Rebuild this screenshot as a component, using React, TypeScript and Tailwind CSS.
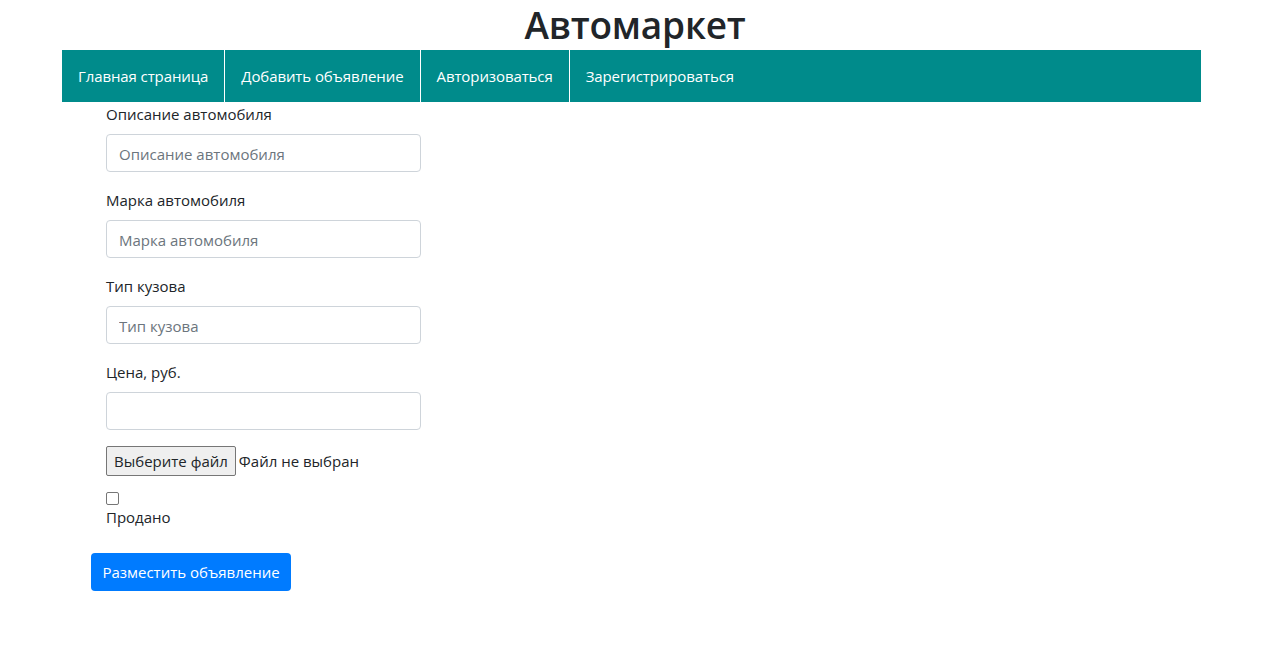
import React from 'react';

const NAV_ITEMS = ['Главная страница', 'Добавить объявление', 'Авторизоваться', 'Зарегистрироваться'];

const FIELDS = [
  { label: 'Описание автомобиля', placeholder: 'Описание автомобиля' },
  { label: 'Марка автомобиля', placeholder: 'Марка автомобиля' },
  { label: 'Тип кузова', placeholder: 'Тип кузова' },
  { label: 'Цена, руб.', placeholder: '' },
];

const App: React.FC = () => {
  return (
    <div className="min-h-screen bg-white text-[#212529] text-[16px] font-['Open_Sans','Noto_Sans',sans-serif]">
      {/* Header */}
      <h1 className="text-center text-[37px] font-semibold leading-[50px] h-[50px] tracking-[-0.2px]">
        Автомаркет
      </h1>

      {/* Nav */}
      <nav className="ml-[62px] w-[1139px] h-[52px] bg-[#008b8b] flex">
        {NAV_ITEMS.map((item, i) => (
          <a
            key={item}
            className={`px-4 flex items-center text-white text-[15px] tracking-[-0.1px] ${
              i < NAV_ITEMS.length - 1 ? 'border-r border-white' : ''
            }`}
          >
            {item}
          </a>
        ))}
      </nav>

      {/* Form */}
      <form className="ml-[91px] w-[360px]">
        <div className="pl-[15px]">
          {FIELDS.map((f) => (
            <div key={f.label} className="mb-4">
              <label className="block leading-6 mb-2 text-[15px]">{f.label}</label>
              <input
                type="text"
                placeholder={f.placeholder}
                className="block w-[315px] h-[38px] px-3 pt-[1px] border border-[#ced4da] rounded text-[15px] placeholder:text-[#6c757d] outline-none"
              />
            </div>
          ))}

          <div className="flex items-center h-[30px] mb-4">
            <span className="h-[30px] px-[7px] flex items-center bg-[#efefef] border border-[#767676] rounded-[2px] text-[15px]">
              Выберите файл
            </span>
            <span className="ml-[3px] text-[15px]">Файл не выбран</span>
          </div>

          <div>
            <span className="block w-[13px] h-[13px] border border-[#767676] rounded-[2px] bg-white" />
            <div className="leading-6 text-[15px]">Продано</div>
          </div>
        </div>

        <button
          type="button"
          className="mt-[24px] h-[38px] w-[200px] bg-[#007bff] text-white rounded text-[15px]"
        >
          Разместить объявление
        </button>
      </form>
    </div>
  );
};

export default App;
